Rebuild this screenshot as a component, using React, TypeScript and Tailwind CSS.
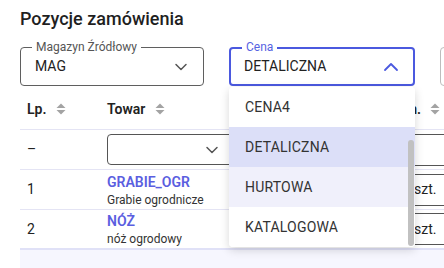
import React from "react";

const Chevron = ({ size, up, color }: { size: number; up?: boolean; color: string }) => (
  <svg width={size} height={size} viewBox="0 0 24 24" fill="none" stroke={color} strokeWidth={1.8} strokeLinecap="round" strokeLinejoin="round">
    <path d={up ? "m6 15 6-6 6 6" : "m6 9 6 6 6-6"} />
  </svg>
);

const Sort = () => (
  <svg width="10" height="12" viewBox="0 0 10 12" fill="#a3a3a3">
    <polygon points="0.5,5 5,0.5 9.5,5" />
    <polygon points="0.5,7 5,11.5 9.5,7" />
  </svg>
);

function Field({ label, value, focused, className }: { label: string; value: string; focused?: boolean; className: string }) {
  return (
    <div
      className={`relative h-[39px] shrink-0 rounded-[4px] ${
        focused ? "border-2 border-[#4b59df]" : "border border-[#5f5f5f]"
      } ${className}`}
    >
      <span
        className={`absolute left-[11px] bg-white px-1 text-[12px] leading-[14px] ${
          focused ? "-top-[9px] left-[10px] text-[#5663e2]" : "-top-[8px] text-[#555]"
        }`}
      >
        {label}
      </span>
      <div className={`flex h-full items-center justify-between ${focused ? "pl-[13px] pr-[10px]" : "pl-[14px] pr-[12px]"}`}>
        <span className="text-[14px] text-[#222]">{value}</span>
        {focused ? <Chevron size={24} up color="#4b59df" /> : <Chevron size={20} color="#555" />}
      </div>
    </div>
  );
}

const Unit = ({ text }: { text?: string }) => (
  <div className="ml-[17px] flex h-[32px] w-[60px] shrink-0 items-center self-center rounded-[4px] border border-[#555] pl-[10px] text-[14px] text-[#222]">
    {text}
  </div>
);

const options = [
  { name: "CENA4", bg: "bg-white" },
  { name: "DETALICZNA", bg: "bg-[#dcdff8]" },
  { name: "HURTOWA", bg: "bg-[#f0f0fb]" },
  { name: "KATALOGOWA", bg: "bg-white" },
];

export default function App() {
  return (
    <div className="relative h-[268px] w-[444px] overflow-hidden bg-white font-['Roboto',sans-serif] text-[#222]">
      <h2 className="pl-5 pt-[7px] text-[18px] font-medium leading-[24px] text-[#1f1f1f]">Pozycje zamówienia</h2>

      <div className="mt-[16px] flex gap-[25px] pl-5">
        <Field label="Magazyn Źródłowy" value="MAG" className="w-[184px]" />
        <Field label="Cena" value="DETALICZNA" focused className="w-[186px]" />
        <div className="h-[39px] w-[40px] shrink-0 rounded-[4px] border border-[#bdbdbd]" />
      </div>

      <div className="ml-5 mt-[3px] w-[480px]">
        <div className="flex h-[41px] items-center border-b border-[#e4e4f4] text-[14px] font-semibold text-[#222]">
          <div className="flex w-[80px] items-center gap-[10px] pl-[7px]">
            Lp. <Sort />
          </div>
          <div className="flex w-[286px] items-center gap-[10px] pl-[7px]">
            Towar <Sort />
          </div>
          <div className="flex items-center gap-[9px]">
            Jedn. <Sort />
          </div>
        </div>

        <div className="flex h-[40px] border-b border-[#e4e4f4] text-[14px]">
          <div className="w-[80px] self-center pl-[7px]">–</div>
          <div className="flex w-[286px] items-center pl-[7px]">
            <div className="flex h-[31px] w-[128px] items-center justify-end rounded-[4px] border border-[#555] pr-[12px]">
              <Chevron size={20} color="#555" />
            </div>
          </div>
          <Unit />
        </div>

        <div className="flex h-[40px] border-b border-[#e4e4f4]">
          <div className="w-[80px] self-center pl-[7px] text-[14px]">1</div>
          <div className="flex w-[286px] flex-col pl-[7px] pt-[3px]">
            <span className="text-[14px] font-semibold leading-[18px] text-[#5a5ee0]">GRABIE_OGR</span>
            <span className="text-[12px] leading-[18px] text-[#333]">Grabie ogrodnicze</span>
          </div>
          <Unit text="szt." />
        </div>

        <div className="flex h-[38px]">
          <div className="w-[80px] self-center pl-[7px] text-[14px]">2</div>
          <div className="flex w-[286px] flex-col pl-[7px] pt-[2px]">
            <span className="text-[14px] font-semibold leading-[18px] text-[#5a5ee0]">NÓŻ</span>
            <span className="text-[12px] leading-[18px] text-[#333]">nóż ogrodowy</span>
          </div>
          <Unit text="szt." />
        </div>

        <div className="h-[30px] border-t-2 border-[#e0e1f7] bg-[#f6f6fe]" />
      </div>

      <div className="absolute left-[229px] top-[87px] h-[160px] w-[186px] overflow-hidden rounded-[4px] bg-white shadow-[0_3px_10px_rgba(0,0,0,0.16)]">
        {options.map((o) => (
          <div key={o.name} className={`flex h-[40px] items-center pl-4 text-[14px] tracking-[0.2px] text-[#333] ${o.bg}`}>
            {o.name}
          </div>
        ))}
        <div className="absolute right-[1px] top-[53px] h-[106px] w-[6px] rounded-full bg-[#c1c1c1]" />
      </div>
    </div>
  );
}
